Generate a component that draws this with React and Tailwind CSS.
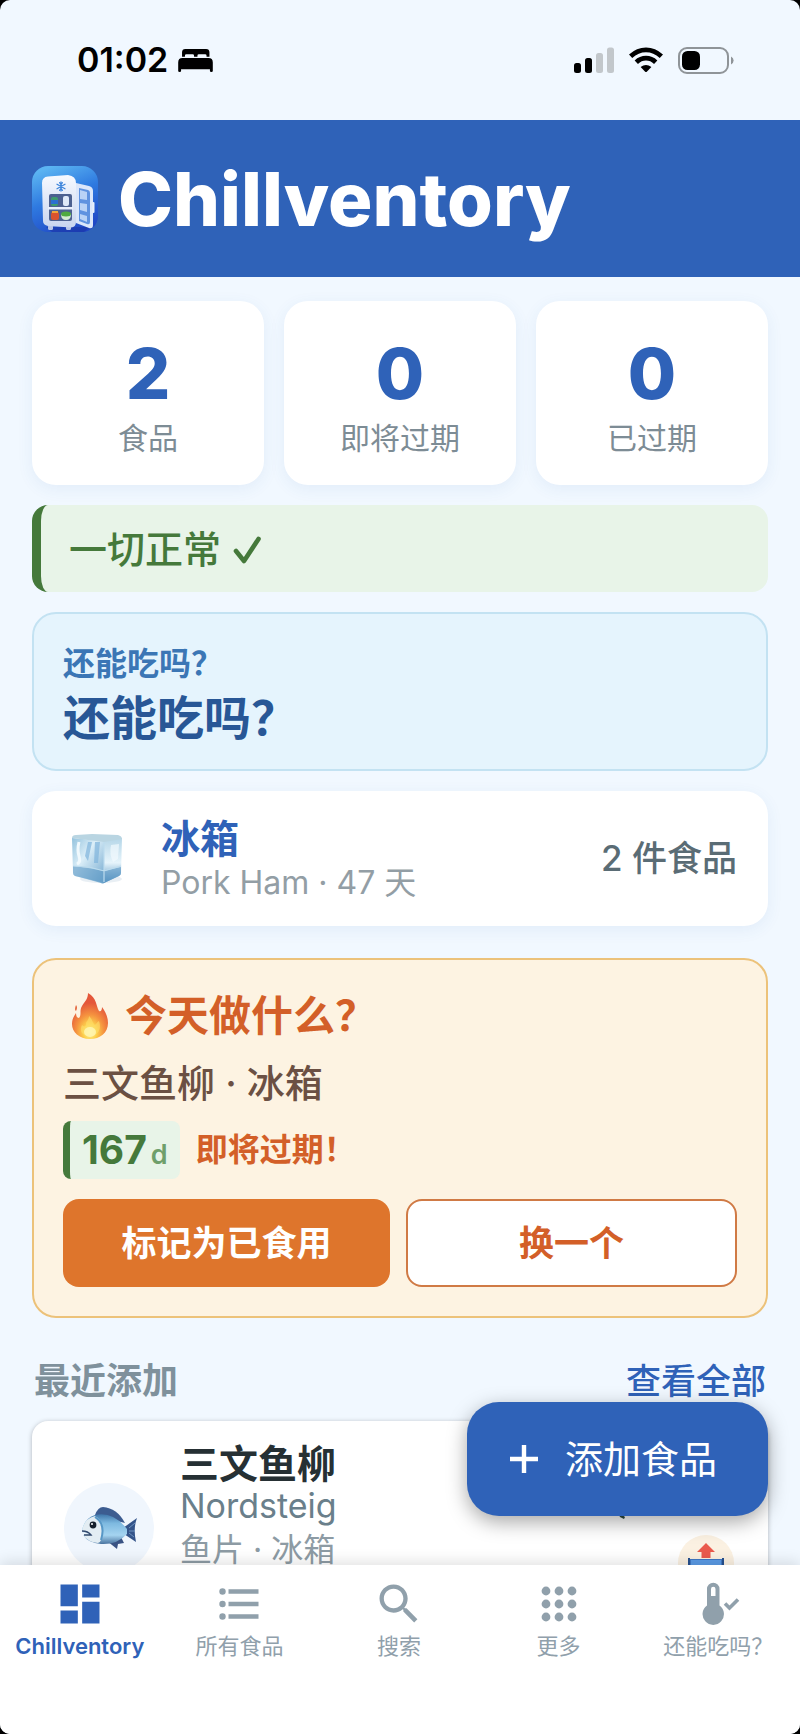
const stats = [
  { value: "2", label: "食品" },
  { value: "0", label: "即将过期" },
  { value: "0", label: "已过期" },
];

function BedIcon() {
  return (
    <svg viewBox="0 0 36 26" className="h-[25px] w-[35px]" aria-hidden="true">
      <path d="M4 9V4.500Q4 1 7.500 1H29Q32.500 1 32.500 4.500V9H29.500V8Q29.500 6.500 28 6.500H21.500Q20 6.500 20 8V9H16.500V8Q16.500 6.500 15 6.500H8.500Q7 6.500 7 8V9Z" />
      <path d="M0 15Q0 10.500 4.500 10.500H31.500Q36 10.500 36 15V24Q36 25 34.500 25Q33 25 33 24V22H3V24Q3 25 1.500 25Q0 25 0 24Z" />
    </svg>
  );
}

function SignalIcon() {
  return (
    <svg viewBox="0 0 40 26" className="h-[26px] w-10" aria-hidden="true">
      <rect x="0" y="16" width="7" height="10" rx="2.500" />
      <rect x="11" y="11" width="7" height="15" rx="2.500" />
      <rect x="22" y="6" width="7" height="20" rx="2.500" fill="#c2c7cb" />
      <rect x="33" y="0.500" width="7" height="25.500" rx="2.500" fill="#c2c7cb" />
    </svg>
  );
}

function WifiIcon() {
  return (
    <svg viewBox="0 0 34 26" className="h-[26px] w-[34px]" aria-hidden="true">
      <g fill="none" stroke="#000" strokeWidth="4.800">
        <path d="M1.600 9.300Q8.500 2.800 17 2.800T32.400 9.300" />
        <path d="M7.300 15.200Q11.500 11.200 17 11.200T26.700 15.200" />
      </g>
      <path d="M11.600 20.100Q17 16 22.400 20.100L17.800 24.700Q17 25.400 16.200 24.700Z" />
    </svg>
  );
}

function BatteryIcon() {
  return (
    <svg viewBox="0 0 56 27" className="h-[27px] w-14" aria-hidden="true">
      <rect x="1" y="1" width="49" height="25" rx="8" fill="none" stroke="#8f9498" strokeWidth="2" />
      <rect x="4" y="4" width="18" height="19" rx="5.500" />
      <path d="M53 9.500Q55.600 11 55.600 13.500T53 17.500Z" fill="#8f9498" />
    </svg>
  );
}

function FridgeLogo() {
  return (
    <svg viewBox="0 0 66 66" className="size-[66px]" aria-hidden="true">
      <defs>
        <linearGradient id="logoBg" x1="0.300" y1="0" x2="0.700" y2="1">
          <stop offset="0" stopColor="#5bb4f2" />
          <stop offset="0.450" stopColor="#2f7ae0" />
          <stop offset="1" stopColor="#1f45c4" />
        </linearGradient>
        <linearGradient id="fridgeBody" x1="0" y1="0" x2="0" y2="1">
          <stop offset="0" stopColor="#f6f9ff" />
          <stop offset="1" stopColor="#c9d5ef" />
        </linearGradient>
      </defs>
      <rect width="66" height="66" rx="16" fill="url(#logoBg)" />
      <path d="M14 61H58L52 66H20Z" fill="#1a36a5" opacity="0.600" />
      <rect x="16" y="59" width="5" height="5" rx="1.500" fill="#b8c5e6" />
      <rect x="34" y="59" width="5" height="5" rx="1.500" fill="#b8c5e6" />
      <path d="M10 17Q10 11 16 10.500L36 9Q44 10 44 17V56Q44 61 39 61.500L16 60Q11 59 11 55Z" fill="url(#fridgeBody)" />
      <g stroke="#3f86dc" strokeWidth="1.300" strokeLinecap="round">
        <path d="M29 16V25M25 18.300L33 22.700M33 18.300L25 22.700" />
        <path d="M27.600 16.800L29 18.200L30.400 16.800M27.600 24.200L29 22.800L30.400 24.200" fill="none" />
      </g>
      <rect x="17" y="28" width="23" height="27" rx="2" fill="#4d6190" />
      <path d="M16 41H41V43.500H16Z" fill="#e8eefb" />
      <rect x="19" y="31" width="7" height="9" rx="2" fill="#3f9c6d" />
      <rect x="19" y="34" width="7" height="4" fill="#2c6fd0" />
      <rect x="31" y="30" width="6" height="10" rx="2" fill="#dfe9f8" />
      <rect x="19" y="46" width="8" height="8" rx="2" fill="#d9532f" />
      <rect x="20" y="45" width="6" height="2" fill="#f0a53a" />
      <path d="M29 48H39Q39 54 34 54T29 48Z" fill="#d5ecd2" />
      <ellipse cx="34" cy="48" rx="5" ry="2.500" fill="#4faa3f" />
      <path d="M44 17L57 20Q61 21 61 25V59Q61 63 57 62L44 57Z" fill="#dbe6fa" />
      <path d="M47 22L56 24Q58 24.500 58 27V56Q58 59 55 58L47 55Z" fill="#5f92e0" />
      <path d="M48 24L55 26V34L48 33ZM48 37L55 38V46L48 44ZM48 48L55 50V56L48 53Z" fill="#b9d2f6" />
      <rect x="60.500" y="36" width="2" height="11" rx="1" fill="#e7effc" />
    </svg>
  );
}

function IceIcon() {
  return (
    <svg viewBox="0 0 54 52" className="h-[52px] w-[54px]" aria-hidden="true">
      <defs>
        <linearGradient id="iceLeft" x1="0" y1="0" x2="1" y2="1">
          <stop offset="0" stopColor="#93c2dd" />
          <stop offset="0.400" stopColor="#dbeef8" />
          <stop offset="1" stopColor="#6fa6cd" />
        </linearGradient>
        <linearGradient id="iceRight" x1="0" y1="0" x2="0" y2="1">
          <stop offset="0" stopColor="#b5d6e8" />
          <stop offset="0.550" stopColor="#e6f4fb" />
          <stop offset="1" stopColor="#4f8fbe" />
        </linearGradient>
      </defs>
      <ellipse cx="31" cy="46" rx="21" ry="4" fill="#dbe4ec" opacity="0.600" />
      <path d="M2 5L34 8L34 50Q33 51 31 50L5 43Q3 42 3 40Z" fill="url(#iceLeft)" />
      <path d="M34 8L52 5L51 40Q51 42 49 43L34 50Z" fill="url(#iceRight)" />
      <path d="M2 5Q2 2 6 2L22 1L48 2Q52 3 52 6L34 9Z" fill="#b9d5e2" />
      <path d="M18 9L15 23L18 28L22 9ZM25 9L24 30L28 30L30 9Z" fill="#7fb3dc" opacity="0.700" />
      <path d="M3 33L18 35L34 38L51 34V40Q51 42 49 43L34 50L5 43Q3 42 3 40Z" fill="#5b98c4" opacity="0.600" />
      <path d="M9 9Q7 17 9 23T7 31" fill="none" stroke="#f0f9fd" strokeWidth="3" />
      <path d="M34 9V49M3 33L19 34L34 38L51 33" fill="none" stroke="#bddcee" strokeWidth="1.200" />
      <path d="M41 12Q39 21 43 29L48 26L49 11Z" fill="#f2fafd" opacity="0.700" />
    </svg>
  );
}

function FireIcon() {
  return (
    <svg viewBox="0 0 38 46" className="h-[46px] w-[38px]" aria-hidden="true">
      <defs>
        <radialGradient id="fire" cx="0.500" cy="0.850" r="0.850">
          <stop offset="0" stopColor="#fff59a" />
          <stop offset="0.220" stopColor="#fdd04c" />
          <stop offset="0.450" stopColor="#f5923f" />
          <stop offset="0.750" stopColor="#e4573a" />
        </radialGradient>
      </defs>
      <path d="M17 0C26 5 25 13 28 18C30 19 31 17 31 14C35 19 37 25 37 30C37 40 29 46 19 46C8 46 1 39 1 31C1 26 3 23 5 20C5 23 6 25 8 25C11 21 8 18 11 13C14 8 17 6 17 0Z" fill="url(#fire)" />
      <path d="M5 12Q7 14 5 18Q3 17 5 12Z" fill="#e4683f" />
      <path d="M18 23C22 27 21 29 24 32C26 30 26 29 28 28C31 36 27 43 19 43C11 43 8 38 11 32C13 34 15 34 15 31C15 28 18 27 18 23Z" fill="#fde06a" opacity="0.600" />
      <ellipse cx="19" cy="39" rx="6" ry="5" fill="#fffbc2" opacity="0.700" />
    </svg>
  );
}

function FishIcon() {
  return (
    <svg viewBox="0 0 56 44" className="h-11 w-14" aria-hidden="true">
      <defs>
        <linearGradient id="fishBody" x1="0" y1="0" x2="0" y2="1">
          <stop offset="0" stopColor="#3f76aa" />
          <stop offset="0.300" stopColor="#7db9e0" />
          <stop offset="0.700" stopColor="#a5d4f0" />
          <stop offset="1" stopColor="#49739f" />
        </linearGradient>
      </defs>
      <path d="M14 9Q17 1 22 1Q36 2 44 17L36 15Z" fill="#3c5c90" />
      <path d="M26 35L36 43L37 38L43 37L40 31L47 29Z" fill="#3a5384" />
      <path d="M42 22L56 12Q52 22 55 36L43 28Z" fill="#34548a" />
      <path d="M1 26Q2 13 14 9Q32 5 46 23V28Q36 39 20 38Q7 37 2 29L9 28Z" fill="url(#fishBody)" />
      <path d="M1 26Q2 13 14 10Q24 15 20 34Q19 37 17 37Q7 36 2 29L9 28Z" fill="#e3edf3" />
      <path d="M14 11Q25 18 20 34" fill="none" stroke="#5797c6" strokeWidth="2" />
      <path d="M1 25Q7 25 10 29L3 29" fill="none" stroke="#32496e" strokeWidth="1.500" />
      <circle cx="12" cy="19" r="3.400" fill="#16202c" />
      <circle cx="11" cy="18" r="1" fill="#fff" />
      <path d="M48 22L54 17M48 25L54 25M48 27L53 31" stroke="#6d93bf" strokeWidth="1" />
    </svg>
  );
}

function OutboxIcon() {
  return (
    <svg viewBox="0 0 38 40" className="h-10 w-[38px]" aria-hidden="true">
      <path d="M1 16H37V36Q37 39 34 39H4Q1 39 1 36Z" fill="#3f78c4" />
      <path d="M4 17H34V24H4Z" fill="#5b9be6" />
      <path d="M1 15H3V30H1ZM35 15H37V30H35Z" fill="#27518e" />
      <path d="M19 0L28 9H23.500V15H14.500V9H10Z" fill="#ea5a4d" />
    </svg>
  );
}

function DashboardIcon() {
  return (
    <svg viewBox="0 0 24 24" className="size-[52px]" fill="currentColor" aria-hidden="true">
      <path d="M3 13h8V3H3v10zm0 8h8v-6H3v6zm10 0h8V11h-8v10zm0-18v6h8V3h-8z" />
    </svg>
  );
}

function ListIcon() {
  return (
    <svg viewBox="0 0 52 52" className="size-[52px]" fill="currentColor" aria-hidden="true">
      <circle cx="9.500" cy="13.500" r="3.200" />
      <circle cx="9.500" cy="26" r="3.200" />
      <circle cx="9.500" cy="38.500" r="3.200" />
      <path d="M15.500 11.300H45.500V15.700H15.500ZM15.500 23.800H45.500V28.200H15.500ZM15.500 36.300H45.500V40.700H15.500Z" />
    </svg>
  );
}

function SearchIcon() {
  return (
    <svg viewBox="0 0 24 24" className="size-[52px]" fill="currentColor" aria-hidden="true">
      <path d="M15.500 14h-.79l-.28-.27C15.410 12.590 16 11.110 16 9.500 16 5.910 13.090 3 9.500 3S3 5.910 3 9.500 5.910 16 9.500 16c1.610 0 3.090-.59 4.230-1.570l.27.28v.79l5 4.990L20.490 19l-4.990-5zm-6 0C7.010 14 5 11.990 5 9.500S7.010 5 9.500 5 14 7.010 14 9.500 11.990 14 9.500 14z" />
    </svg>
  );
}

function GridIcon() {
  return (
    <svg viewBox="0 0 52 52" className="size-[52px]" fill="currentColor" aria-hidden="true">
      {[13, 26, 39].map((y) =>
        [13, 26, 39].map((x) => <circle key={`${x}-${y}`} cx={x} cy={y} r="4.400" />)
      )}
    </svg>
  );
}

function ThermometerIcon() {
  return (
    <svg viewBox="0 0 52 52" className="size-[52px]" fill="currentColor" aria-hidden="true">
      <path
        fillRule="evenodd"
        d="M15 11A6.200 6.200 0 0 1 27.500 11V27.500A10.700 10.700 0 1 1 15 27.500ZM19 11V18H23.500V11A2.250 2.250 0 0 0 19 11Z"
      />
      <path d="M33 25.500L37.500 30L46 21.500" fill="none" stroke="currentColor" strokeWidth="3.600" />
    </svg>
  );
}

const tabs = [
  { label: "Chillventory", Icon: DashboardIcon, active: true },
  { label: "所有食品", Icon: ListIcon },
  { label: "搜索", Icon: SearchIcon },
  { label: "更多", Icon: GridIcon },
  { label: "还能吃吗？", Icon: ThermometerIcon },
];

function StatusBar() {
  return (
    <div className="flex h-[120px] shrink-0 items-center justify-between pl-[77px] pr-[66px]">
      <div className="flex items-center gap-2.5">
        <span className="text-[34px] font-semibold leading-10 text-black">01:02</span>
        <BedIcon />
      </div>
      <div className="flex items-center gap-[15px]">
        <SignalIcon />
        <WifiIcon />
        <BatteryIcon />
      </div>
    </div>
  );
}

function StatCard({ value, label }) {
  return (
    <div className="flex flex-1 flex-col items-center rounded-3xl bg-white pt-[33px] pb-[27px] shadow-[0_4px_16px_rgba(47,98,184,0.08)]">
      <span className="text-[70px] font-extrabold leading-[80px] text-[#2f62b8]">{value}</span>
      <span className="mt-1 text-[30px] leading-10 text-[#7d8c95]">{label}</span>
    </div>
  );
}

function TodayCard() {
  return (
    <section className="mt-3 rounded-3xl border-2 border-[#ecc27a] bg-[#fdf3e2] p-[29px]">
      <h2 className="flex items-center gap-4 pl-2 text-[42px] font-bold leading-[54px] text-[#d35f28]">
        <FireIcon />
        今天做什么？
      </h2>
      <p className="mt-3 text-[38px] leading-[56px] font-medium text-[#6b5043]">三文鱼柳 · 冰箱</p>
      <div className="mt-2.5 flex items-center gap-4">
        <span className="flex h-[58px] items-baseline gap-1 rounded-lg border-l-[7px] border-[#45793b] bg-[#e8f4e8] pl-3 pr-3 leading-[58px]">
          <b className="text-[39px] font-bold text-[#45793b]">167</b>
          <span className="text-[27px] font-semibold text-[#6f9f6b]">d</span>
        </span>
        <span className="text-[32px] font-semibold leading-10 text-[#d35f28]">即将过期！</span>
      </div>
      <div className="mt-5 flex gap-4">
        <button type="button" className="h-[88px] flex-1 rounded-2xl bg-[#de752c] text-[35px] font-semibold text-white">
          标记为已食用
        </button>
        <button type="button" className="h-[88px] flex-1 rounded-2xl border-2 border-[#d07a45] bg-white text-[35px] font-semibold text-[#d35f28]">
          换一个
        </button>
      </div>
    </section>
  );
}

function FoodCard() {
  return (
    <article className="mt-4 flex items-center rounded-2xl bg-white px-8 py-[18px] shadow-[0_1px_5px_rgba(0,0,0,0.28)]">
      <div className="flex size-[90px] shrink-0 items-center justify-center rounded-full bg-[#f0f6fd]">
        <FishIcon />
      </div>
      <div className="ml-[26px] min-h-[178px] flex-1">
        <h3 className="text-[39px] font-semibold leading-[49px] text-[#263034]">三文鱼柳</h3>
        <p className="text-[34px] leading-9 text-[#6a7f8b]">Nordsteig</p>
        <p className="mt-1 text-[32px] leading-11 text-[#8d9ba4]">鱼片 · 冰箱</p>
      </div>
      <div className="flex flex-col items-end gap-4 pr-0.5">
        <svg viewBox="0 0 120 54" className="h-[54px] w-[120px]" aria-hidden="true">
          <path d="M3 46L11 52L10 54L6 52Z" fill="#2c4a40" />
        </svg>
        <button type="button" aria-label="取出" className="flex size-14 items-center justify-center rounded-full bg-[#fbf1e2]">
          <OutboxIcon />
        </button>
      </div>
    </article>
  );
}

export default function App() {
  return (
    <div className="h-screen bg-black font-[Inter,'Noto_Sans_CJK_SC',sans-serif]">
      <div className="flex h-full flex-col overflow-hidden rounded-[10px] bg-[#f1f8ff]">
        <StatusBar />
        <header className="flex shrink-0 items-center gap-5 bg-[#2f62b8] px-8 pt-[31px] pb-[30px]">
          <FridgeLogo />
          <h1 className="text-[74px] font-extrabold leading-[96px] text-white">Chillventory</h1>
        </header>

        <div className="relative min-h-0 flex-1">
          <main className="flex h-full flex-col gap-5 overflow-hidden px-8 pt-6 *:shrink-0">
            <section className="flex gap-5">
              {stats.map((s) => (
                <StatCard key={s.label} value={s.value} label={s.label} />
              ))}
            </section>

            <div className="flex items-center gap-3 rounded-2xl border-l-[9px] border-[#45793b] bg-[#e8f4e8] px-7 pt-[21px] pb-[19px] text-[38px] font-medium leading-[47px] text-[#45793b]">
              一切正常
              <svg viewBox="0 0 28 28" className="size-7" aria-hidden="true">
                <path d="M3 15L11 25L25.500 3" fill="none" stroke="#45793b" strokeWidth="4.600" strokeLinecap="round" strokeLinejoin="round" />
              </svg>
            </div>

            <section className="rounded-3xl border-2 border-[#c3e2f2] bg-[#e5f4fd] px-[29px] pt-7 pb-[21px]">
              <p className="text-[32px] font-semibold leading-11 text-[#3b76b5]">还能吃吗？</p>
              <h2 className="mt-0.5 text-[47px] font-bold leading-[60px] text-[#285796]">还能吃吗？</h2>
            </section>

            <section className="flex items-center rounded-3xl bg-white py-[23px] pl-[38px] pr-[31px] shadow-[0_4px_16px_rgba(47,98,184,0.08)]">
              <IceIcon />
              <div className="ml-[37px] flex-1">
                <h2 className="text-[39px] font-bold leading-[49px] text-[#2f62b8]">冰箱</h2>
                <p className="text-[32px] leading-10 text-[#939ea5]">Pork Ham · 47 天</p>
              </div>
              <span className="text-[35px] font-medium text-[#5a6c75]">2 件食品</span>
            </section>

            <TodayCard />

            <section className="mt-[19px]">
              <div className="flex items-center justify-between pl-0.5 pr-0.5 leading-[48px]">
                <h2 className="text-[36px] font-semibold text-[#7f919c]">最近添加</h2>
                <a href="#all" className="text-[35px] font-medium text-[#2f62b8]">查看全部</a>
              </div>
              <FoodCard />
            </section>
          </main>

          <button
            type="button"
            className="absolute right-8 bottom-[49px] flex h-[114px] items-center gap-[27px] rounded-[32px] bg-[#2f62b8] pl-[43px] pr-[51px] text-[38px] text-white shadow-[0_6px_20px_rgba(0,0,0,0.35)]"
          >
            <svg viewBox="0 0 28 28" className="size-7" aria-hidden="true">
              <path d="M14 0V28M0 14H28" stroke="#fff" strokeWidth="4.400" />
            </svg>
            添加食品
          </button>
        </div>

        <nav className="relative flex h-[169px] shrink-0 bg-white pt-[13px] pr-0.5 shadow-[0_-3px_14px_rgba(0,0,0,0.12)]">
          {tabs.map(({ label, Icon, active }) => (
            <button
              key={label}
              type="button"
              aria-current={active ? "page" : undefined}
              className={
                active
                  ? "flex flex-1 basis-0 flex-col items-center whitespace-nowrap text-[22px] font-semibold leading-8 text-[#2f62b8]"
                  : "flex flex-1 basis-0 flex-col items-center whitespace-nowrap text-[22px] leading-8 text-[#90a0ab]"
              }
            >
              <Icon />
              {label}
            </button>
          ))}
        </nav>
      </div>
    </div>
  );
}
